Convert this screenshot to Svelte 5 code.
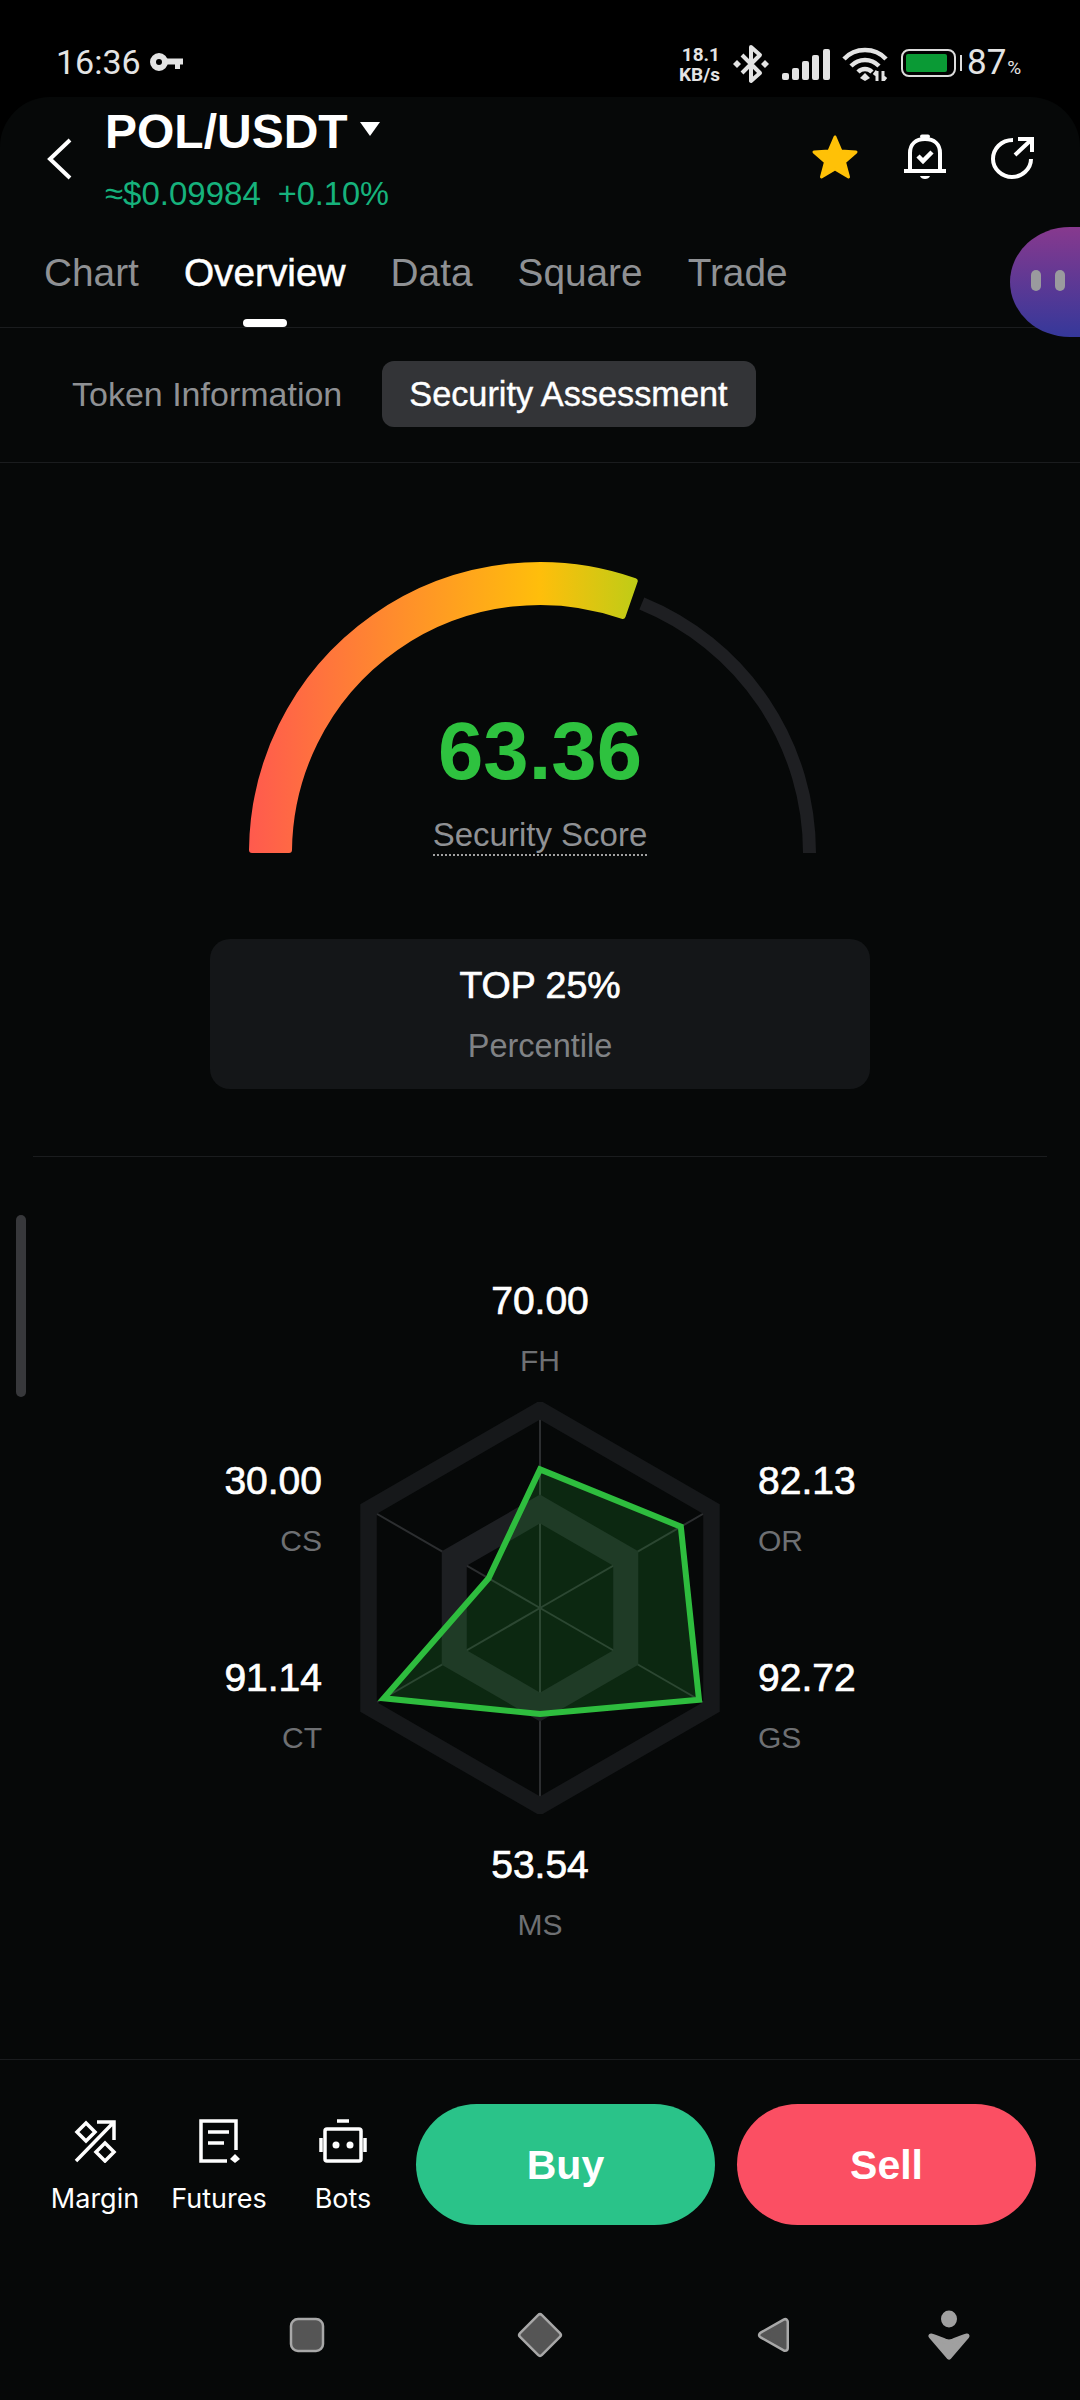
<script>
  const tabs = ["Chart", "Overview", "Data", "Square", "Trade"];

  // radar: value 100 sits on the outer band
  const cx = 180;
  const cy = 206;
  const R = 198;
  const axes = [
    { key: "FH", value: 70.0 },
    { key: "OR", value: 82.13 },
    { key: "GS", value: 92.72 },
    { key: "MS", value: 53.54 },
    { key: "CT", value: 91.14 },
    { key: "CS", value: 30.0 },
  ];

  function pt(i, r) {
    const a = (Math.PI / 3) * i;
    return [cx + r * Math.sin(a), cy - r * Math.cos(a)];
  }
  function hex(r) {
    return axes.map((_, i) => pt(i, r).join(",")).join(" ");
  }
  const dataPoints = axes.map((a, i) => pt(i, (R * a.value) / 100).join(",")).join(" ");
  const spokes = axes.map((_, i) => pt(i, R));
</script>

<div class="screen">
  <div class="status">
    <div class="status-left">
      <span class="time">16:36</span>
      <svg width="33" height="20" viewBox="0 0 33 20">
        <circle cx="9" cy="10" r="6" fill="none" stroke="#e4e4e4" stroke-width="6" />
        <path d="M15 6.500H33V12.500H30V17H25V12.500H15Z" fill="#e4e4e4" />
      </svg>
    </div>
    <div class="status-right">
      <div class="speed"><span>18.1</span><span>KB/s</span></div>
      <svg class="bt" width="36" height="40" viewBox="0 0 36 40" fill="none">
        <path d="M9 11L27 29L18 37V3L27 11L9 29" stroke="#e4e4e4" stroke-width="4" stroke-linejoin="round" />
        <path d="M4 16L8 20L4 24L0 20ZM32 16L36 20L32 24L28 20Z" fill="#e4e4e4" />
      </svg>
      <svg class="sig" width="48" height="31" viewBox="0 0 48 31" fill="#e4e4e4">
        <rect x="0" y="24" width="7" height="7" rx="2" />
        <rect x="10" y="19" width="7" height="12" rx="2" />
        <rect x="20" y="12" width="7" height="19" rx="2" />
        <rect x="30" y="6" width="7" height="25" rx="2" />
        <rect x="41" y="0" width="7" height="31" rx="2" />
      </svg>
      <svg class="wifi" width="47" height="34" viewBox="0 0 47 34" fill="none" stroke="#e4e4e4" stroke-width="4.500">
        <path d="M2 12C13 0 33 0 44 12" />
        <path d="M9 19C17 11 29 11 37 19" />
        <path d="M16 25C20 21 26 21 30 25" />
        <path d="M23 26L28 31L23 34L18 31Z" fill="#e4e4e4" stroke="none" />
        <path d="M35 24V34M32 28L35 24M41 24V34L44 30" stroke-width="3" />
      </svg>
      <div class="battery"><div class="battery-fill"></div></div>
      <div class="nub"></div>
      <span class="pct">87<small>%</small></span>
    </div>
  </div>

  <div class="panel">
    <div class="header">
      <svg class="back" width="25" height="42" viewBox="0 0 25 42" fill="none">
        <path d="M23 2L3 21L23 40" stroke="#fff" stroke-width="4" />
      </svg>
      <div class="pair">
        <div class="title">
          POL/USDT
          <svg width="20" height="14" viewBox="0 0 20 14"><path d="M0 0H20L10 14Z" fill="#fff" /></svg>
        </div>
        <div class="price"><span>≈$0.09984</span><span class="change">+0.10%</span></div>
      </div>
      <div class="actions">
        <svg width="48" height="46" viewBox="0 0 48 46">
          <path d="M24 3L30 17L45 18L33.500 28L37.500 43L24 35L10.500 43L14.500 28L3 18L18 17Z" fill="#ffc107" stroke="#ffc107" stroke-width="3" stroke-linejoin="round" />
        </svg>
        <svg width="44" height="48" viewBox="0 0 44 48" fill="none" stroke="#fff" stroke-width="4">
          <path d="M7 38V20C7 11 13 6 22 6C31 6 37 11 37 20V38" />
          <path d="M1 38H43" />
          <path d="M19 3.500H25" stroke-linecap="round" />
          <path d="M15 23L20 28L29 19" stroke-width="4.500" />
          <path d="M17 43H27C26 47 18 47 17 43Z" fill="#fff" stroke="none" />
        </svg>
        <svg width="43" height="43" viewBox="0 0 43 43" fill="none" stroke="#fff" stroke-width="4">
          <path d="M22 4C10 4 2 13 2 23C2 33 11 41 21 41C31 41 40 33 40 23" />
          <path d="M24 19L40 4M27 3H41V16" />
        </svg>
      </div>
    </div>

    <div class="tabs">
      {#each tabs as tab}
        <div class="tab" class:active={tab === "Overview"}>
          <span>{tab}</span>
          {#if tab === "Overview"}<i class="indicator"></i>{/if}
        </div>
      {/each}
    </div>
    <div class="blob"><i></i><i></i></div>

    <div class="subtabs">
      <div class="subtab">Token Information</div>
      <div class="subtab on">Security Assessment</div>
    </div>

    <div class="gauge">
      <svg class="gauge-svg" width="600" height="310" viewBox="240 553 600 310">
        <defs>
          <linearGradient id="heat" gradientUnits="userSpaceOnUse" x1="249" y1="0" x2="637" y2="0">
            <stop offset="0" stop-color="#ff5a4e" />
            <stop offset="0.75" stop-color="#ffbe0b" />
            <stop offset="1" stop-color="#bfcc16" />
          </linearGradient>
        </defs>
        <path d="M641.800 603.500A269.500 269.500 0 0 1 809.500 853" fill="none" stroke="#1e1f22" stroke-width="13" />
        <path d="M252 850A288 288 0 0 1 634.700 581L622.600 616A251 251 0 0 0 289 850Z" fill="url(#heat)" stroke="url(#heat)" stroke-width="6" stroke-linejoin="round" />
      </svg>
      <div class="gauge-text">
        <div class="score">63.36</div>
        <div class="score-label">Security Score</div>
      </div>
    </div>

    <div class="card">
      <div class="card-top">TOP 25%</div>
      <div class="card-sub">Percentile</div>
    </div>

    <div class="divider"></div>

    <div class="chart">
      <div class="lbl">
        <div class="val">70.00</div>
        <div class="key">FH</div>
      </div>
      <div class="chart-row">
        <div class="side left">
          <div class="lbl"><div class="val">30.00</div><div class="key">CS</div></div>
          <div class="lbl"><div class="val">91.14</div><div class="key">CT</div></div>
        </div>
        <svg width="360" height="412" viewBox="0 0 360 412">
          {#each spokes as s}
            <line x1={cx} y1={cy} x2={s[0]} y2={s[1]} stroke="#2c2e30" stroke-width="2" />
          {/each}
          <polygon points={hex(198)} fill="none" stroke="#16181a" stroke-width="16.500" />
          <polygon points={hex(99)} fill="none" stroke="#1d1f22" stroke-width="25" />
          <polygon points={dataPoints} fill="#2ebd3e" fill-opacity="0.18" stroke="#2ebd3e" stroke-width="6" />
        </svg>
        <div class="side">
          <div class="lbl"><div class="val">82.13</div><div class="key">OR</div></div>
          <div class="lbl"><div class="val">92.72</div><div class="key">GS</div></div>
        </div>
      </div>
      <div class="lbl bottom">
        <div class="val">53.54</div>
        <div class="key">MS</div>
      </div>
    </div>

    <div class="trade-bar">
      <div class="tools">
        <div class="tool">
          <svg width="44" height="44" viewBox="0 0 44 44" fill="none" stroke="#fff" stroke-width="3.500">
            <path d="M3 42L40 4M24 3H41V21" />
            <path d="M13 4L22 13L13 22L4 13ZM32 24L41 33L32 42L23 33Z" />
          </svg>
          <span>Margin</span>
        </div>
        <div class="tool">
          <svg width="44" height="44" viewBox="0 0 44 44" fill="none" stroke="#fff" stroke-width="3.500">
            <path d="M39 31V2H4V42H30" />
            <path d="M11 13H32M11 24H27" />
            <path d="M38 35L43 40L38 44L33 40Z" fill="#fff" stroke="none" />
          </svg>
          <span>Futures</span>
        </div>
        <div class="tool">
          <svg width="48" height="44" viewBox="0 0 48 44" fill="none" stroke="#fff" stroke-width="3.500">
            <rect x="6" y="10" width="36" height="32" rx="2" />
            <path d="M18 2H30M2 19V33M46 19V33" />
            <circle cx="17" cy="26" r="3.500" fill="#fff" stroke="none" />
            <circle cx="31" cy="26" r="3.500" fill="#fff" stroke="none" />
          </svg>
          <span>Bots</span>
        </div>
      </div>
      <div class="btn buy">Buy</div>
      <div class="btn sell">Sell</div>
    </div>

    <div class="nav">
      <svg width="60" height="50" viewBox="0 0 60 50">
        <rect x="14" y="9" width="32" height="32" rx="7" fill="#555" stroke="#a8a8a8" stroke-width="2.500" />
      </svg>
      <svg width="60" height="50" viewBox="0 0 60 50" stroke-linejoin="round">
        <path d="M30 7L48 25L30 43L12 25Z" fill="#a8a8a8" stroke="#a8a8a8" stroke-width="8" />
        <path d="M30 7L48 25L30 43L12 25Z" fill="#555" stroke="#555" stroke-width="3" />
      </svg>
      <svg width="60" height="50" viewBox="0 0 60 50" stroke-linejoin="round">
        <path d="M42 12V38L19 25Z" fill="#a8a8a8" stroke="#a8a8a8" stroke-width="8" />
        <path d="M42 12V38L19 25Z" fill="#555" stroke="#555" stroke-width="3" />
      </svg>
      <svg class="last" width="60" height="50" viewBox="0 0 60 50" fill="#a0a0a0">
        <ellipse cx="30" cy="9" rx="8" ry="8.500" />
        <path d="M12 26C18 27 26 32 30 32C34 32 42 27 48 26L30 47Z" stroke="#a0a0a0" stroke-width="5" stroke-linejoin="round" />
      </svg>
    </div>

    <div class="scroll-thumb"></div>
  </div>
</div>

<style>
  :global(body) {
    margin: 0;
    background: #000;
  }
  .screen {
    width: 1080px;
    height: 2400px;
    background: #000;
    color: #fff;
    font-family: "Liberation Sans", Arial, sans-serif;
    overflow: hidden;
  }

  /* status bar */
  .status {
    height: 97px;
    display: flex;
    justify-content: space-between;
    align-items: flex-start;
    padding: 0 61px 0 56px;
    color: #e4e4e4;
    font-family: Roboto, sans-serif;
  }
  .status-left {
    display: flex;
    align-items: center;
    gap: 9px;
    margin-top: 42px;
  }
  .time {
    font-size: 34px;
    line-height: 40px;
  }
  .status-right {
    display: flex;
    align-items: flex-start;
    margin-top: 42px;
  }
  .speed {
    display: flex;
    flex-direction: column;
    align-items: flex-end;
    font-size: 19px;
    font-weight: 700;
    line-height: 20px;
    width: 39px;
    margin-top: 3px;
  }
  .bt {
    margin: 2px 0 0 13px;
  }
  .sig {
    margin: 7px 0 0 13px;
  }
  .wifi {
    margin: 5px 0 0 12px;
  }
  .battery {
    box-sizing: border-box;
    width: 55px;
    height: 28px;
    margin: 7px 0 0 12px;
    border: 2.5px solid #dcdcdc;
    border-radius: 8px;
    padding: 3px;
  }
  .battery-fill {
    width: 41px;
    height: 100%;
    background: #0a9a35;
    border-radius: 2px;
  }
  .nub {
    width: 2px;
    height: 16px;
    margin: 13px 0 0 4px;
    background: #dcdcdc;
  }
  .pct {
    width: 52px;
    white-space: nowrap;
    font-size: 35px;
    line-height: 40px;
    margin: 1px 0 0 5px;
  }
  .pct small {
    font-size: 19px;
    margin-left: 1px;
  }

  /* main panel */
  .panel {
    position: relative;
    height: 2303px;
    background: #060808;
    border-radius: 50px 50px 0 0;
  }
  .header {
    box-sizing: border-box;
    height: 128px;
    display: flex;
    align-items: center;
    padding: 9px 46px 13px 47px;
  }
  .back {
    margin-right: 33px;
  }
  .pair {
    flex: 1;
  }
  .title {
    display: flex;
    align-items: center;
    gap: 12px;
    font-size: 48px;
    font-weight: 700;
    line-height: 52px;
  }
  .title svg {
    margin-bottom: 6px;
  }
  .price {
    display: flex;
    gap: 17px;
    margin-top: 18px;
    color: #16b27c;
    font-size: 33px;
    line-height: 36px;
  }
  .change {
    font-size: 32.5px;
  }
  .actions {
    display: flex;
    align-items: center;
    gap: 44px;
    margin-bottom: 4px;
  }
  .tabs {
    box-sizing: border-box;
    height: 103px;
    display: flex;
    gap: 45px;
    padding: 26px 0 0 44px;
    border-bottom: 1px solid #1a1c1e;
  }
  .tab {
    display: flex;
    flex-direction: column;
    align-items: center;
    font-size: 38.8px;
    line-height: 44px;
    color: #8f9194;
  }
  .tab.active {
    color: #fff;
    -webkit-text-stroke: 0.5px #fff;
  }
  .indicator {
    width: 44px;
    height: 8px;
    margin-top: 24px;
    border-radius: 4px;
    background: #fff;
  }
  .blob {
    position: absolute;
    top: 130px;
    left: 1010px;
    width: 70px;
    height: 110px;
    display: flex;
    gap: 14px;
    align-items: center;
    padding-left: 21px;
    box-sizing: border-box;
    border-radius: 60px 0 0 60px / 55px 0 0 55px;
    background: linear-gradient(#87398e, #35389a);
  }
  .blob i {
    width: 10px;
    height: 21px;
    border-radius: 5px;
    background: #9a9a9e;
    margin-bottom: 4px;
  }
  .subtabs {
    box-sizing: border-box;
    height: 135px;
    display: flex;
    gap: 13px;
    align-items: flex-start;
    padding: 33px 0 0 45px;
    border-bottom: 1px solid #1a1c1e;
  }
  .subtab {
    height: 66px;
    padding: 0 27px;
    font-size: 34px;
    line-height: 66px;
    color: #8f9194;
    border-radius: 12px;
  }
  .subtab.on {
    padding: 0 28px 0 27px;
    background: #333437;
    color: #fff;
    font-size: 34.3px;
    -webkit-text-stroke: 0.4px #fff;
  }

  /* gauge */
  .gauge {
    display: grid;
    justify-items: center;
    padding-top: 90px;
  }
  .gauge-svg,
  .gauge-text {
    grid-area: 1 / 1;
  }
  .gauge-text {
    align-self: end;
    display: flex;
    flex-direction: column;
    align-items: center;
    padding-bottom: 7px;
  }
  .score {
    color: #2ec23f;
    font-size: 81.5px;
    font-weight: 700;
    line-height: 80px;
  }
  .score-label {
    margin-top: 26px;
    padding-bottom: 1px;
    color: #8f9194;
    font-size: 33px;
    line-height: 36px;
    border-bottom: 2px dotted #a0a0a0;
  }
  .card {
    box-sizing: border-box;
    width: 660px;
    height: 150px;
    margin: 76px auto 0;
    display: flex;
    flex-direction: column;
    align-items: center;
    padding-top: 26px;
    background: #141618;
    border-radius: 20px;
  }
  .card-top {
    font-size: 37.5px;
    line-height: 40px;
    -webkit-text-stroke: 0.7px #fff;
  }
  .card-sub {
    margin-top: 21px;
    color: #808285;
    font-size: 32.5px;
    line-height: 40px;
  }
  .divider {
    height: 1px;
    margin: 67px 33px 0;
    background: #1a1c1e;
  }

  /* radar */
  .chart {
    height: 903px;
    box-sizing: border-box;
    display: flex;
    flex-direction: column;
    align-items: center;
    padding-top: 124px;
    border-bottom: 1px solid #1a1c1e;
  }
  .chart > .lbl {
    align-items: center;
  }
  .chart > .lbl:first-child {
    margin-bottom: 23px;
  }
  .chart > .bottom {
    margin-top: 31px;
  }
  .chart-row {
    display: flex;
    justify-content: center;
    gap: 38px;
  }
  .side {
    width: 322px;
    display: flex;
    flex-direction: column;
    gap: 99px;
    padding-top: 59px;
  }
  .side.left {
    align-items: flex-end;
  }
  .lbl {
    display: flex;
    flex-direction: column;
  }
  .side.left .lbl {
    align-items: flex-end;
  }
  .val {
    font-size: 39px;
    line-height: 40px;
    -webkit-text-stroke: 0.7px #fff;
  }
  .key {
    margin-top: 22px;
    color: #6e7073;
    font-size: 30px;
    line-height: 36px;
  }

  /* bottom */
  .trade-bar {
    display: flex;
    padding: 44px 44px 0 33px;
  }
  .tools {
    display: flex;
    width: 372px;
    margin-right: 11px;
    padding-top: 15px;
  }
  .tool {
    width: 124px;
    display: flex;
    flex-direction: column;
    align-items: center;
    font-family: Inter, sans-serif;
    font-size: 27px;
    line-height: 34px;
    gap: 19px;
  }
  .btn {
    width: 299px;
    height: 121px;
    border-radius: 61px;
    text-align: center;
    font-size: 41px;
    font-weight: 700;
    line-height: 123px;
  }
  .buy {
    background: #2ac389;
  }
  .sell {
    margin-left: 22px;
    background: #fb4f63;
  }
  .nav {
    display: flex;
    gap: 173px;
    padding: 85px 0 0 277px;
  }
  .nav .last {
    margin-left: -57px;
  }
  .scroll-thumb {
    position: absolute;
    left: 16px;
    top: 1118px;
    width: 10px;
    height: 182px;
    border-radius: 5px;
    background: #37383b;
  }
</style>
